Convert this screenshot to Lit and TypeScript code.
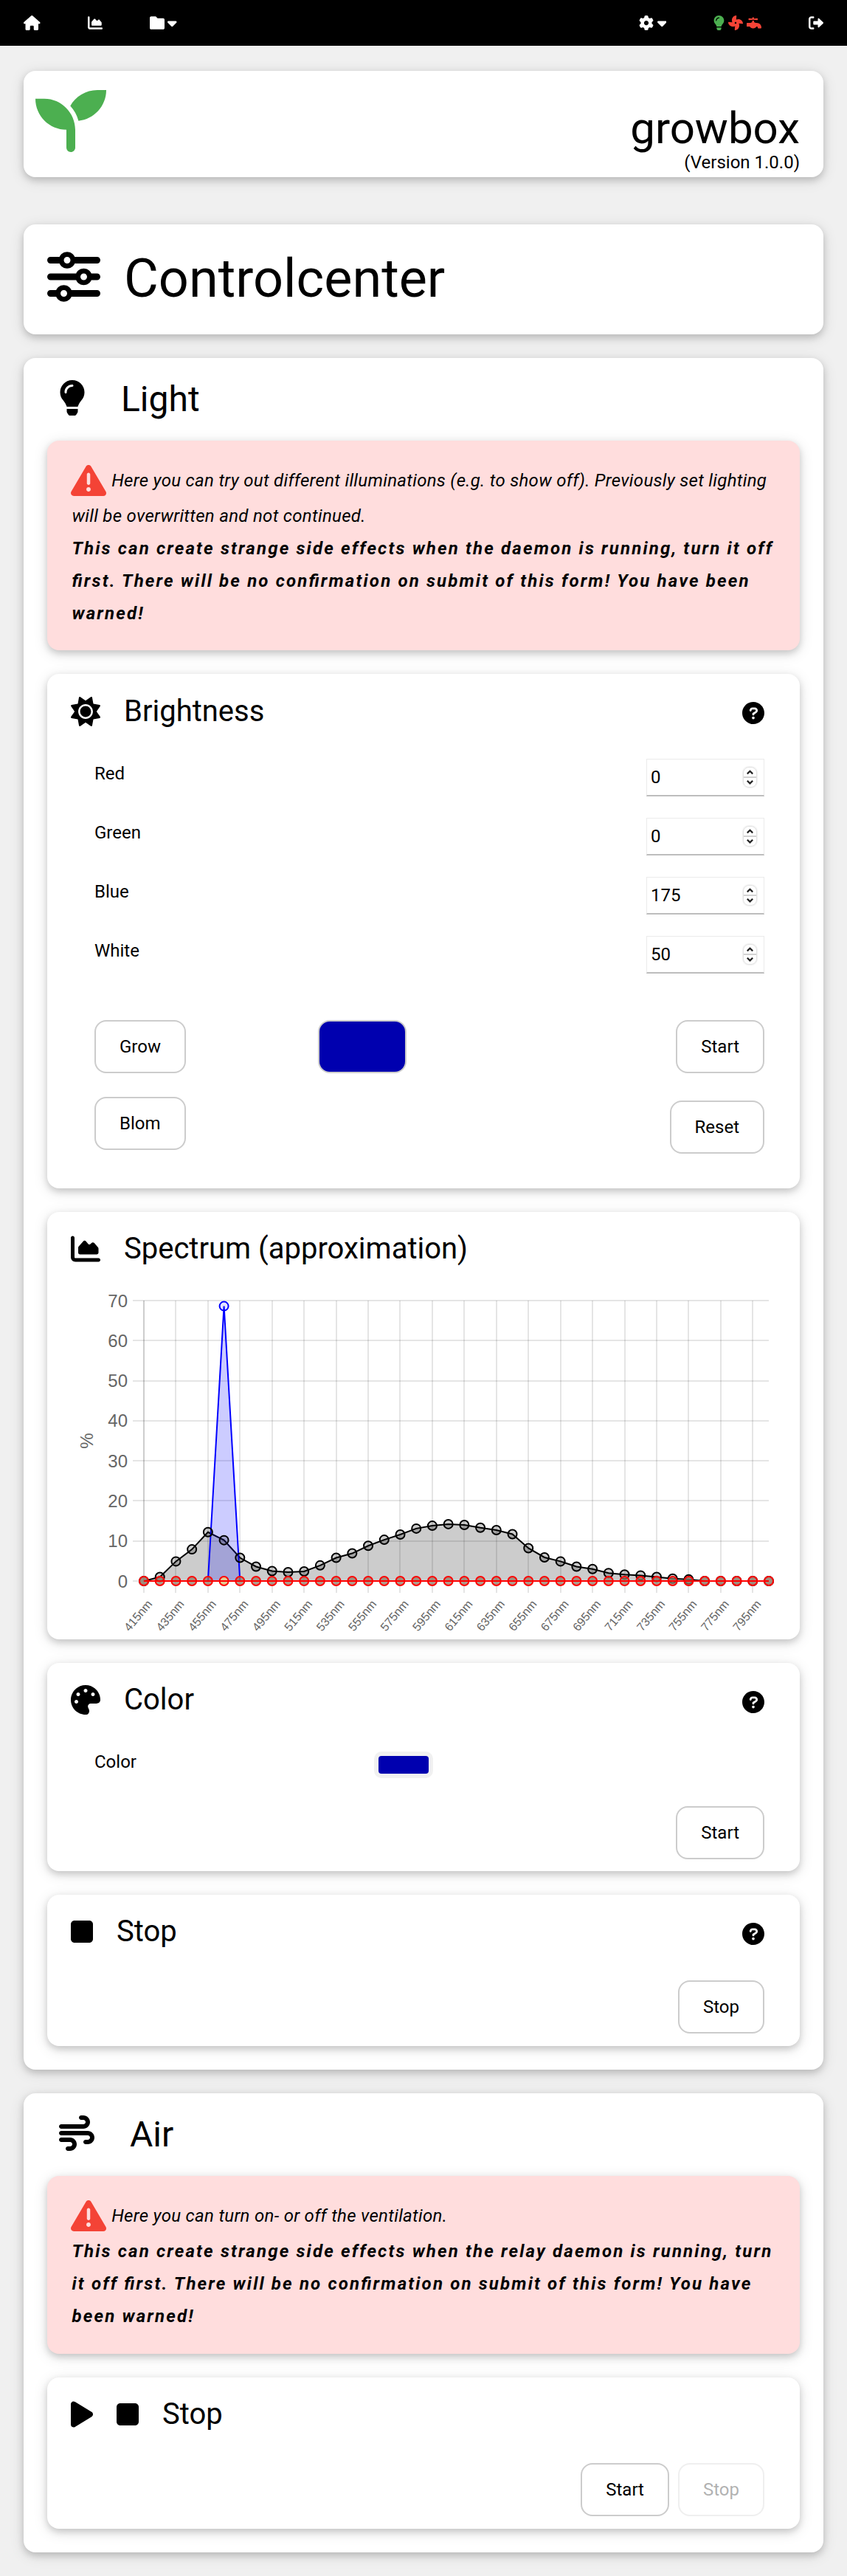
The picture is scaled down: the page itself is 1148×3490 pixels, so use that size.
import { LitElement, html, svg, css } from "lit";
import { customElement } from "lit/decorators.js";

interface Glyph { w: number; d: string; }

const ICONS: Record<string, Glyph> = {
  house: { w: 576, d: "M575.8 255.5C575.8 273.5 560.8 287.6 543.8 287.6H511.8L512.5 447.7C512.5 450.5 512.3 453.1 512 455.8V472C512 494.1 494.1 512 472 512H456C454.9 512 453.8 511.1 452.7 511.9C451.3 511.1 449.9 512 448.5 512H392C369.9 512 352 494.1 352 472V384C352 366.3 337.7 352 320 352H256C238.3 352 224 366.3 224 384V472C224 494.1 206.1 512 184 512H128.1C126.6 512 125.1 511.9 123.6 511.8C122.4 511.9 121.2 512 120 512H104C81.91 512 64 494.1 64 472V360C64 359.1 64.03 358.1 64.09 357.2V287.6H32.05C14.02 287.6 0 273.5 0 255.5C0 246.5 3.004 238.5 10.01 231.5L266.4 8.016C273.4 1.002 281.4 0 288.4 0C295.4 0 303.4 2.004 309.5 7.014L564.8 231.5C572.8 238.5 576.9 246.5 575.8 255.5L575.8 255.5z" },
  chart: { w: 512, d: "M64 400C64 408.8 71.16 416 80 416H480C497.7 416 512 430.3 512 448C512 465.7 497.7 480 480 480H80C35.82 480 0 444.2 0 400V64C0 46.33 14.33 32 32 32C49.67 32 64 46.33 64 64V400zM128 320V236C128 228.3 130.8 220.8 135.9 214.1L215.3 124.2C228.3 109.4 251.4 109.7 263.1 124.8L303.2 171.8C312.2 182.7 328.6 183.4 338.6 173.4L359.6 152.4C372.7 139.3 394.4 140.1 406.5 154.2L472.3 231C477.3 236.8 480 244.2 480 251.8V320C480 337.7 465.7 352 448 352H159.1C142.3 352 127.1 337.7 127.1 320L128 320z" },
  folder: { w: 512, d: "M512 144v288c0 26.5-21.5 48-48 48h-416C21.5 480 0 458.5 0 432v-352C0 53.5 21.5 32 48 32h160l64 64h192C490.5 96 512 117.5 512 144z" },
  caret: { w: 320, d: "M310.6 246.6l-127.1 128C176.4 380.9 168.2 384 160 384s-16.38-3.125-22.63-9.375l-127.1-128C.2244 237.5-2.516 223.7 2.438 211.8S19.07 192 32 192h255.1c12.94 0 24.62 7.781 29.58 19.75S319.8 237.5 310.6 246.6z" },
  gear: { w: 512, d: "M495.9 166.6C499.2 175.2 496.4 184.9 489.6 191.2L446.3 230.6C447.4 238.9 448 247.4 448 256C448 264.6 447.4 273.1 446.3 281.4L489.6 320.8C496.4 327.1 499.2 336.8 495.9 345.4C491.5 357.3 486.2 368.8 480.2 379.7L475.5 387.8C468.9 398.8 461.5 409.2 453.4 419.1C447.4 426.2 437.7 428.7 428.9 425.9L373.2 408.1C359.8 418.4 344.1 427 329.2 433.6L316.7 490.7C314.7 499.7 307.7 506.1 298.5 508.5C284.7 510.8 270.5 512 255.1 512C241.5 512 227.3 510.8 213.5 508.5C204.3 506.1 197.3 499.7 195.3 490.7L182.8 433.6C167 427 152.2 418.4 138.8 408.1L83.14 425.9C74.3 428.7 64.55 426.2 58.63 419.1C50.52 409.2 43.12 398.8 36.52 387.8L31.84 379.7C25.77 368.8 20.49 357.3 16.06 345.4C12.82 336.8 15.55 327.1 22.41 320.8L65.67 281.4C64.57 273.1 64 264.6 64 256C64 247.4 64.57 238.9 65.67 230.6L22.41 191.2C15.55 184.9 12.82 175.3 16.06 166.6C20.49 154.7 25.78 143.2 31.84 132.3L36.51 124.2C43.12 113.2 50.52 102.8 58.63 92.95C64.55 85.8 74.3 83.32 83.14 86.14L138.8 103.9C152.2 93.56 167 84.96 182.8 78.43L195.3 21.33C197.3 12.25 204.3 5.04 213.5 3.51C227.3 1.201 241.5 0 256 0C270.5 0 284.7 1.201 298.5 3.51C307.7 5.04 314.7 12.25 316.7 21.33L329.2 78.43C344.1 84.96 359.8 93.56 373.2 103.9L428.9 86.14C437.7 83.32 447.4 85.8 453.4 92.95C461.5 102.8 468.9 113.2 475.5 124.2L480.2 132.3C486.2 143.2 491.5 154.7 495.9 166.6V166.6zM256 336C300.2 336 336 300.2 336 256C336 211.8 300.2 176 255.1 176C211.8 176 175.1 211.8 175.1 256C175.1 300.2 211.8 336 255.1 336H256z" },
  bulb: { w: 384, d: "M112.1 454.3c0 6.297 1.816 12.44 5.284 17.69l17.14 25.69c5.25 7.875 17.17 14.28 26.64 14.28h61.67c9.438 0 21.36-6.401 26.61-14.28l17.08-25.68c2.938-4.438 5.348-12.37 5.348-17.7L272 415.1h-160L112.1 454.3zM191.4 .0132C89.44 .3257 16 82.97 16 175.1c0 44.38 16.44 84.84 43.56 115.8c16.53 18.84 42.34 58.23 52.22 91.45c.0313 .25 .0938 .5166 .125 .7823h160.2c.0313-.2656 .0938-.5166 .125-.7823c9.875-33.22 35.69-72.61 52.22-91.45C351.6 260.8 368 220.4 368 175.1C368 78.61 288.9-.2837 191.4 .0132zM192 96.01c-44.13 0-80 35.89-80 79.1C112 184.8 104.8 192 96 192S80 184.8 80 176c0-61.76 50.25-111.1 112-111.1c8.844 0 16 7.159 16 16S200.8 96.01 192 96.01z" },
  fan: { w: 512, d: "M352.6 127.1c-28.12 0-54.13 4.5-77.13 12.88l12.38-123.1c1.125-10.5-8.125-18.88-18.5-17.63C189.6 10.12 127.1 77.62 127.1 159.4c0 28.12 4.5 54.13 12.88 77.13L17.75 224.1c-10.5-1.125-18.88 8.125-17.63 18.5c9.1 79.75 77.5 141.4 159.3 141.4c28.12 0 54.13-4.5 77.13-12.88l-12.38 123.1c-1.125 10.38 8.125 18.88 18.5 17.63c79.75-10 141.4-77.5 141.4-159.3c0-28.12-4.5-54.13-12.88-77.13l123.1 12.38c10.5 1.125 18.88-8.125 17.63-18.5C501.9 189.6 434.4 127.1 352.6 127.1zM256 287.1c-17.62 0-31.1-14.38-31.1-32s14.37-32 31.1-32s31.1 14.38 31.1 32S273.6 287.1 256 287.1z" },
  faucet: { w: 512, d: "M352 256h-38.54C297.7 242.5 277.9 232.9 256 228V180.5L224 177L192 180.5V228C170.1 233 150.3 242.6 134.5 256H16C7.125 256 0 263.1 0 272v96C0 376.9 7.125 384 16 384h92.78C129.4 421.8 173 448 224 448s94.59-26.25 115.2-64H352c17.62 0 32 14.29 32 31.91S398.4 448 416 448h64c17.62 0 32-14.31 32-31.94C512 327.7 440.4 256 352 256zM81.63 159.9L224 144.9l142.4 15C375.9 160.9 384 153.1 384 143.1V112.9c0-10-8.125-17.74-17.62-16.74L256 107.8V80C256 71.12 248.9 64 240 64h-32C199.1 64 192 71.12 192 80v27.75L81.63 96.14C72.13 95.14 64 102.9 64 112.9v30.24C64 153.1 72.13 160.9 81.63 159.9z" },
  logout: { w: 512, d: "M96 480h64C177.7 480 192 465.7 192 448S177.7 416 160 416H96c-17.67 0-32-14.33-32-32V128c0-17.67 14.33-32 32-32h64C177.7 96 192 81.67 192 64S177.7 32 160 32H96C42.98 32 0 74.98 0 128v256C0 437 42.98 480 96 480zM504.8 238.5l-144.1-136c-6.975-6.578-17.2-8.375-26-4.594c-8.803 3.797-14.51 12.47-14.51 22.05l-.0918 72l-128-.001c-17.69 0-32.02 14.33-32.02 32v64c0 17.67 14.34 32 32.02 32l128 .001l.0918 71.1c0 9.578 5.707 18.25 14.51 22.05c8.803 3.781 19.03 1.984 26-4.594l144.1-136C514.4 264.4 514.4 247.6 504.8 238.5z" },
  seedling: { w: 512, d: "M64 95.1H0c0 123.8 100.3 224 224 224v128C224 465.6 238.4 480 256 480s32-14.4 32-32V320C288 196.3 187.7 95.1 64 95.1zM448 32c-84.25 0-157.4 46.25-195.8 114.2c27.87 30.25 48.38 66.62 58.88 107.5c0 .125 .1246 .25 .1246 .375C424.1 243.1 512 147.3 512 32H448z" },
  sliders: { w: 512, d: "M0 416C0 398.3 14.33 384 32 384H86.66C99 355.7 127.2 336 160 336C192.8 336 220.1 355.7 233.3 384H480C497.7 384 512 398.3 512 416C512 433.7 497.7 448 480 448H233.3C220.1 476.3 192.8 496 160 496C127.2 496 99 476.3 86.66 448H32C14.33 448 0 433.7 0 416V416zM192 416C192 398.3 177.7 384 160 384C142.3 384 128 398.3 128 416C128 433.7 142.3 448 160 448C177.7 448 192 433.7 192 416zM352 176C384.8 176 412.1 195.7 425.3 224H480C497.7 224 512 238.3 512 256C512 273.7 497.7 288 480 288H425.3C412.1 316.3 384.8 336 352 336C319.2 336 291 316.3 278.7 288H32C14.33 288 0 273.7 0 256C0 238.3 14.33 224 32 224H278.7C291 195.7 319.2 176 352 176zM384 256C384 238.3 369.7 224 352 224C334.3 224 320 238.3 320 256C320 273.7 334.3 288 352 288C369.7 288 384 273.7 384 256zM480 64C497.7 64 512 78.33 512 96C512 113.7 497.7 128 480 128H265.3C252.1 156.3 224.8 176 192 176C159.2 176 131 156.3 118.7 128H32C14.33 128 0 113.7 0 96C0 78.33 14.33 64 32 64H118.7C131 35.75 159.2 16 192 16C224.8 16 252.1 35.75 265.3 64H480zM160 96C160 113.7 174.3 128 192 128C209.7 128 224 113.7 224 96C224 78.33 209.7 64 192 64C174.3 64 160 78.33 160 96z" },
  warning: { w: 512, d: "M506.3 417l-213.3-364c-16.33-28-57.54-28-73.98 0l-213.2 364C-10.59 444.9 9.849 480 42.74 480h426.6C502.1 480 522.6 445 506.3 417zM232 168c0-13.25 10.75-24 24-24S280 154.8 280 168v128c0 13.25-10.75 24-23.1 24S232 309.3 232 296V168zM256 416c-17.36 0-31.44-14.08-31.44-31.44c0-17.36 14.07-31.44 31.44-31.44s31.44 14.08 31.44 31.44C287.4 401.9 273.4 416 256 416z" },
  sun: { w: 512, d: "M256 159.1c-53.02 0-95.1 42.98-95.1 95.1S202.1 351.1 256 351.1s95.1-42.98 95.1-95.1S309 159.1 256 159.1zM509.3 347L446.1 255.1l63.15-91.01c6.332-9.125 1.104-21.74-9.826-23.72l-109-19.7l-19.7-109c-1.975-10.93-14.59-16.16-23.72-9.824L256 65.89L164.1 2.736c-9.125-6.332-21.74-1.107-23.72 9.824L121.6 121.6L12.56 141.3C1.633 143.2-3.596 155.9 2.736 164.1L65.89 256l-63.15 91.01c-6.332 9.125-1.105 21.74 9.824 23.72l109 19.7l19.7 109c1.975 10.93 14.59 16.16 23.72 9.824L256 446.1l91.01 63.15c9.127 6.334 21.75 1.107 23.72-9.822l19.7-109l109-19.7C510.4 368.8 515.6 356.1 509.3 347zM256 383.1c-70.69 0-127.1-57.31-127.1-127.1c0-70.69 57.31-127.1 127.1-127.1s127.1 57.3 127.1 127.1C383.1 326.7 326.7 383.1 256 383.1z" },
  help: { w: 512, d: "M256 0C114.6 0 0 114.6 0 256s114.6 256 256 256s256-114.6 256-256S397.4 0 256 0zM256 400c-18 0-32-14-32-32s13.1-32 32-32c17.1 0 32 14 32 32S273.1 400 256 400zM325.1 258L280 286V288c0 13-11 24-24 24S232 301 232 288V272c0-8 4-16 12-21l57-34C308 213 312 206 312 198C312 186 301.1 176 289.1 176h-51.1C225.1 176 216 186 216 198c0 13-11 24-24 24s-24-11-24-24C168 159 199 128 237.1 128h51.1C329 128 360 159 360 198C360 222 347 245 325.1 258z" },
  palette: { w: 512, d: "M512 255.1C512 256.9 511.1 257.8 511.1 258.7C511.6 295.2 478.4 319.1 441.9 319.1H344C317.5 319.1 296 341.5 296 368C296 371.4 296.4 374.7 297 377.9C299.2 388.1 303.5 397.1 307.9 407.8C313.9 421.6 320 435.3 320 449.8C320 481.7 298.4 510.5 266.6 511.8C263.1 511.9 259.5 512 256 512C114.6 512 0 397.4 0 256C0 114.6 114.6 0 256 0C397.4 0 512 114.6 512 256V255.1zM96 255.1C78.33 255.1 64 270.3 64 287.1C64 305.7 78.33 319.1 96 319.1C113.7 319.1 128 305.7 128 287.1C128 270.3 113.7 255.1 96 255.1zM128 191.1C145.7 191.1 160 177.7 160 159.1C160 142.3 145.7 127.1 128 127.1C110.3 127.1 96 142.3 96 159.1C96 177.7 110.3 191.1 128 191.1zM256 63.1C238.3 63.1 224 78.33 224 95.1C224 113.7 238.3 127.1 256 127.1C273.7 127.1 288 113.7 288 95.1C288 78.33 273.7 63.1 256 63.1zM384 191.1C401.7 191.1 416 177.7 416 159.1C416 142.3 401.7 127.1 384 127.1C366.3 127.1 352 142.3 352 159.1C352 177.7 366.3 191.1 384 191.1z" },
  stop: { w: 384, d: "M384 128v255.1c0 35.35-28.65 64-64 64H64c-35.35 0-64-28.65-64-64V128c0-35.35 28.65-64 64-64H320C355.3 64 384 92.65 384 128z" },
  play: { w: 384, d: "M361 215C375.3 223.8 384 239.3 384 256C384 272.7 375.3 288.2 361 296.1L73.03 472.1C58.21 482 39.66 482.4 24.52 473.9C9.377 465.4 0 449.4 0 432V80C0 62.64 9.377 46.63 24.52 38.13C39.66 29.64 58.21 29.99 73.03 39.04L361 215z" },
  wind: { w: 512, d: "M32 192h320c52.94 0 96-43.06 96-96s-43.06-96-96-96h-32c-17.69 0-32 14.31-32 32s14.31 32 32 32h32c17.66 0 32 14.34 32 32s-14.34 32-32 32H32c-17.69 0-32 14.31-32 32S14.31 192 32 192zM160 320H32c-17.69 0-32 14.31-32 32s14.31 32 32 32h128c17.66 0 32 14.34 32 32s-14.34 32-32 32H128c-17.69 0-32 14.31-32 32s14.31 32 32 32h32c52.94 0 96-43.06 96-96S212.9 320 160 320zM416 224H32C14.31 224 0 238.3 0 256s14.31 32 32 32h384c17.66 0 32 14.34 32 32s-14.34 32-32 32h-32c-17.69 0-32 14.31-32 32s14.31 32 32 32h32c52.94 0 96-43.06 96-96S468.9 224 416 224z" },
};

const icon = (name: string, size: number, cls = "") => {
  const g = ICONS[name];
  return html`<svg class="icon ${cls}" width=${(g.w / 512) * size} height=${size} viewBox="0 0 ${g.w} 512"><path d=${g.d} /></svg>`;
};

const WHITE = [
  0, 1, 4.9, 7.9, 12.2, 10.2, 5.8, 3.6, 2.5, 2.2, 2.4, 3.9, 5.8, 6.9, 8.8, 10.3, 11.6, 13.1, 13.8, 14.2,
  14, 13.3, 12.7, 11.7, 8.2, 5.9, 4.9, 3.6, 3, 2, 1.6, 1.4, 1, 0.6, 0.4, 0, 0, 0, 0, 0,
];

@customElement("spectrum-chart")
export class SpectrumChart extends LitElement {
  static styles = css`
    :host { display: block; }
    svg { display: block; }
    .axis { font: 24px "Liberation Sans", sans-serif; fill: #666; }
    .tick { font: 16px "Liberation Sans", sans-serif; fill: #666; }
    .grid { stroke: rgba(0, 0, 0, 0.1); stroke-width: 2; fill: none; }
    .white-area { fill: rgba(0, 0, 0, 0.2); }
    .blue-area { fill: rgba(0, 0, 255, 0.2); }
    .line { fill: none; stroke-width: 2; }
    .black { stroke: #000; }
    .blue { stroke: #00f; }
    .red { stroke: #f00; }
    .dot { stroke-width: 2; fill: rgba(0, 0, 0, 0.2); }
    .dot.blue { fill: rgba(0, 0, 255, 0.1); }
    .dot.red { fill: rgba(150, 120, 100, 0.75); }
    .dot.amber { fill: rgb(226, 200, 145); }
  `;

  private x(i: number) { return 99 + (i * 847) / 39; }
  private y(v: number) { return 404 - (v * 380) / 70; }

  render() {
    const pts = WHITE.map((v, i) => `${this.x(i)},${this.y(v)}`).join(" ");
    const peak = `${this.x(4)},${this.y(0)} ${this.x(5)},${this.y(68.6)} ${this.x(6)},${this.y(0)}`;
    return html`<svg width="956" height="483" viewBox="0 0 956 483">
      ${[0, 10, 20, 30, 40, 50, 60, 70].map((v) => svg`
        <path class="grid" d="M84 ${Math.round(this.y(v))}H946" />
        <text class="axis" x="77" y=${this.y(v) + 8.5} text-anchor="end">${v}</text>`)}
      ${WHITE.map((_, i) => i % 2 ? null : svg`
        <path class="grid" d="M${Math.round(this.x(i))} 24V420" />
        <text class="tick" text-anchor="end" transform="translate(${this.x(i) + 12} 435.5) rotate(-50)">${415 + i * 10}nm</text>`)}
      <path class="grid" d="M99 24V404" />
      <text class="axis" text-anchor="middle" transform="translate(30 214) rotate(-90)">%</text>
      <polygon class="white-area" points="${pts}" />
      <polyline class="line black" points=${pts} />
      <polygon class="blue-area" points=${peak} />
      <polyline class="line blue" points=${peak} />
      ${WHITE.map((v, i) => svg`<circle class="dot black" cx=${this.x(i)} cy=${this.y(v)} r="6" />`)}
      <circle class="dot blue" cx=${this.x(5)} cy=${this.y(68.6)} r="6" />
      ${WHITE.map((_, i) => svg`<circle class="dot red ${i === 5 ? "amber" : ""}" cx=${this.x(i)} cy=${this.y(0)} r="6" />`)}
      <path class="line red" d="M99 404H946" />
    </svg>`;
  }
}

@customElement("app-root")
export class AppRoot extends LitElement {
  static styles = css`
    :host {
      display: block;
      min-height: 3490px;
      background: #f0f0f0;
      color: #000;
      font: 24px/36px Roboto, "Liberation Sans", sans-serif;
    }
    * { box-sizing: border-box; }
    .icon { display: block; flex: none; fill: currentColor; }
    .nav { display: flex; align-items: center; height: 62px; padding: 0 32px; background: #000; color: #fff; }
    .nav .item { display: flex; align-items: center; }
    .chart-item { margin-left: 64px; }
    .folder-item { margin-left: 64px; gap: 4.5px; }
    .gear-item { margin-left: auto; gap: 5px; }
    .state-item { margin-left: 64px; gap: 5px; }
    .out-item { margin-left: 64px; }
    .green { color: #4caf50; }
    .crimson { color: #f44336; }
    main { display: flex; flex-direction: column; gap: 32px; padding: 34px 32px 32px; }
    .card { border-radius: 16px; background: #fff; box-shadow: 0 4px 10px rgba(0, 0, 0, 0.16), 0 4px 20px rgba(0, 0, 0, 0.12); }
    .banner { display: flex; justify-content: space-between; height: 144px; padding: 20px 32px 0 16px; margin-bottom: 32px; }
    .brand { padding-top: 22px; text-align: right; }
    .brand-name { font-size: 60px; line-height: 72px; }
    .version { line-height: 20px; }
    .title { display: flex; align-items: center; gap: 32px; height: 149px; padding: 20px 32px 21px; font-size: 72px; line-height: 108px; }
    .title .icon { margin-bottom: 6px; }
    .section { display: flex; flex-direction: column; gap: 32px; padding: 0 32px 32px; }
    .section-head { display: flex; align-items: center; gap: 48px; height: 92px; padding: 20px 16px 0; margin-bottom: -12px; font-size: 48px; line-height: 72px; }
    .section-head .icon { margin-bottom: 4px; }
    .alert { padding: 30px 32px 28px; background: #ffdddd; font-style: italic; line-height: 44px; }
    .alert.air { padding-bottom: 29px; }
    .alert p { margin: 0; padding-left: 1.5px; letter-spacing: 0.3px; font-feature-settings: "liga" 1; }
    .alert .icon { display: inline-block; vertical-align: -18px; margin: 0 1px 2px -1.5px; }
    .alert .loud { font-weight: 700; letter-spacing: 2.16px; }
    .panel-head { display: flex; align-items: center; gap: 32px; height: 80px; padding: 20px 48px 0 32px; font-size: 40px; line-height: 60px; }
    .panel-head .help { margin: 6px 0 0 auto; }
    .brightness { height: 697px; }
    .brightness .panel-head { padding-top: 21px; }
    .brightness .panel-head .help { margin-top: 5px; }
    .spectrum { height: 579px; padding: 0 32px; }
    .spectrum .panel-head { padding: 20px 0 0; }
    .spectrum spectrum-chart { margin-top: 16px; }
    .rows { padding: 35px 48px 0 64px; }
    .row { display: flex; justify-content: space-between; align-items: flex-start; height: 80px; }
    .row label { padding-top: 2px; }
    .number { display: flex; align-items: center; justify-content: space-between; width: 160px; height: 51px; padding: 0 9px 0 5px; border: 1px solid #ebebeb; border-bottom: 2px solid #bdbdbd; }
    .spin { display: flex; flex-direction: column; width: 19px; height: 28px; border-radius: 8px; border: 1px solid #e2e2e2; box-shadow: 0 0 2px rgba(0, 0, 0, 0.18); }
    .spin svg { display: block; }
    .actions { display: flex; padding: 34px 48px 0 64px; align-items: flex-start; }
    .stack { display: flex; flex-direction: column; align-items: flex-start; gap: 32px; }
    .stack.end { align-items: flex-end; gap: 36.5px; margin-left: auto; }
    .btn { height: 72px; padding: 16px 32px; border: 2px solid #ccc; border-radius: 16px; background: #fff; line-height: 36px; }
    .btn.off { opacity: 0.3; }
    .swatch { width: 120px; height: 72px; margin-left: 179px; border: 2px solid #ccc; border-radius: 16px; background: #0000af; }
    .colour { height: 282px; }
    .colour-row { display: flex; align-items: flex-start; height: 114px; padding: 36px 48px 0 64px; }
    .colour-row label { width: 379px; }
    .picker { width: 80px; height: 36px; margin-top: 4px; padding: 6px; border-radius: 10px; background: #f1f1f1; }
    .picker div { height: 24px; border-radius: 4px; background: #0000af; }
    .foot { display: flex; justify-content: flex-end; gap: 12px; padding: 0 48px 16px; }
    .foot.low { padding-top: 36px; padding-bottom: 17px; }
  `;

  private number(label: string, value: number) {
    return html`<div class="row"><label>${label}</label>
      <div class="number"><span>${value}</span>
        <div class="spin"><svg width="17" height="26" viewBox="0 0 17 26">
          <path d="M0 13H17" stroke="#d2d2d2" stroke-width="2" />
          <path d="M4.8 8.4L8.5 4.8L12.2 8.4M4.8 17.8L8.5 21.4L12.2 17.8" fill="none" stroke="#222" stroke-width="2.2" />
        </svg></div>
      </div></div>`;
  }

  render() {
    return html`
      <nav class="nav">
        <div class="item">${icon("house", 20)}</div>
        <div class="item chart-item">${icon("chart", 20)}</div>
        <div class="item folder-item">${icon("folder", 20)}${icon("caret", 20)}</div>
        <div class="item gear-item">${icon("gear", 20)}${icon("caret", 20)}</div>
        <div class="item state-item">${icon("bulb", 20, "green")}${icon("fan", 20, "crimson")}${icon("faucet", 20, "crimson")}</div>
        <div class="item out-item">${icon("logout", 20)}</div>
      </nav>
      <main>
        <header class="card banner">
          ${icon("seedling", 96, "green")}
          <div class="brand"><div class="brand-name">growbox</div><div class="version">(Version 1.0.0)</div></div>
        </header>
        <div class="card title">${icon("sliders", 72)}<span>Controlcenter</span></div>

        <section class="card section">
          <div class="section-head">${icon("bulb", 48)}<span>Light</span></div>
          <div class="card alert">
            <p>${icon("warning", 48, "crimson")} Here you can try out different illuminations (e.g. to show off). Previously set lighting will be overwritten and not continued.</p>
            <p class="loud">This can create strange side effects when the daemon is running, turn it off first. There will be no confirmation on submit of this form! You have been warned!</p>
          </div>
          <div class="card brightness">
            <div class="panel-head">${icon("sun", 40)}<span>Brightness</span>${icon("help", 30, "help")}</div>
            <div class="rows">
              ${this.number("Red", 0)}${this.number("Green", 0)}${this.number("Blue", 175)}${this.number("White", 50)}
            </div>
            <div class="actions">
              <div class="stack"><div class="btn">Grow</div><div class="btn">Blom</div></div>
              <div class="swatch"></div>
              <div class="stack end"><div class="btn">Start</div><div class="btn">Reset</div></div>
            </div>
          </div>
          <div class="card spectrum">
            <div class="panel-head">${icon("chart", 40)}<span>Spectrum (approximation)</span></div>
            <spectrum-chart></spectrum-chart>
          </div>
          <div class="card colour">
            <div class="panel-head">${icon("palette", 40)}<span>Color</span>${icon("help", 30, "help")}</div>
            <div class="colour-row"><label>Color</label><div class="picker"><div></div></div></div>
            <div class="foot"><div class="btn">Start</div></div>
          </div>
          <div class="card">
            <div class="panel-head">${icon("stop", 40)}<span>Stop</span>${icon("help", 30, "help")}</div>
            <div class="foot low"><div class="btn">Stop</div></div>
          </div>
        </section>

        <section class="card section">
          <div class="section-head">${icon("wind", 48)}<span>Air</span></div>
          <div class="card alert air">
            <p>${icon("warning", 48, "crimson")} Here you can turn on- or off the ventilation.</p>
            <p class="loud">This can create strange side effects when the relay daemon is running, turn it off first. There will be no confirmation on submit of this form! You have been warned!</p>
          </div>
          <div class="card">
            <div class="panel-head">${icon("play", 40)}${icon("stop", 40)}<span>Stop</span></div>
            <div class="foot low"><div class="btn">Start</div><div class="btn off">Stop</div></div>
          </div>
        </section>
      </main>
    `;
  }
}
